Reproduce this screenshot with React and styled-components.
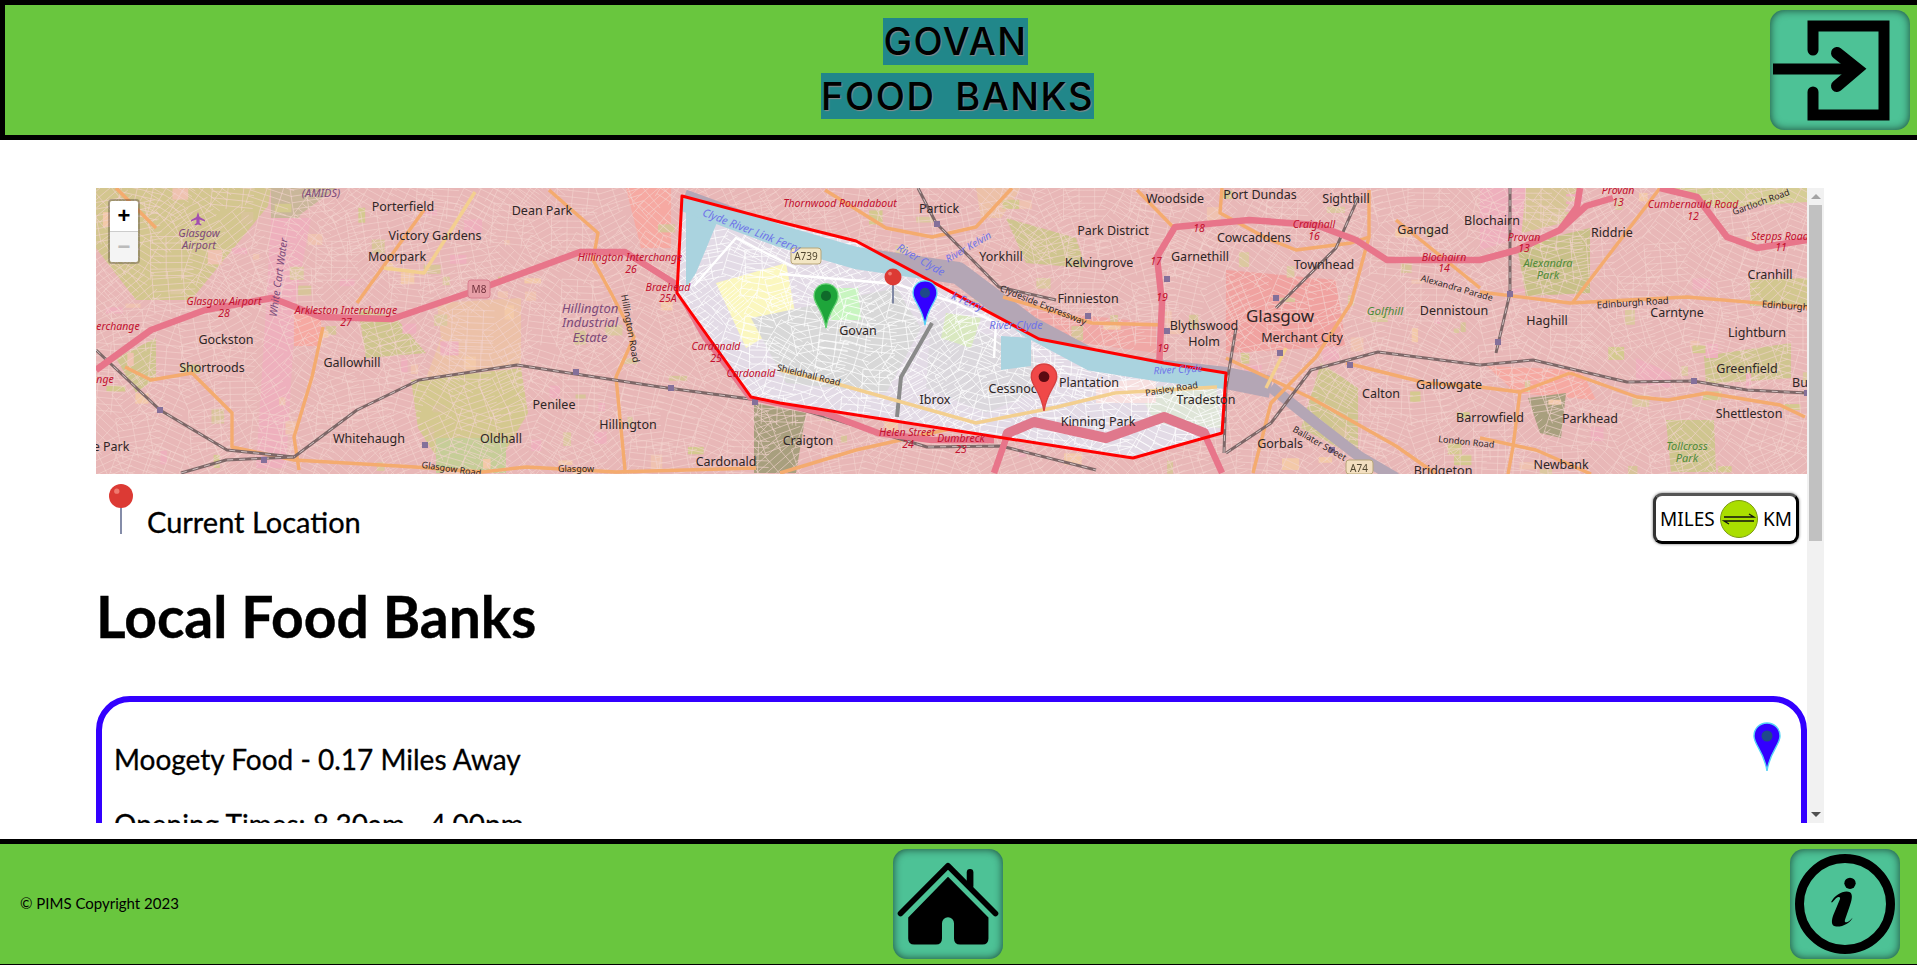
import styled, { createGlobalStyle } from "styled-components";

const GlobalStyle = createGlobalStyle`
  html, body { margin: 0; padding: 0; background: #fff; }
  body { font-family: "Lato", "Noto Sans", sans-serif; color: #000; overflow: hidden; }
`;

const Page = styled.div`
  height: 100vh;
  display: flex;
  flex-direction: column;
`;

const Header = styled.header`
  flex: none;
  height: 140px;
  box-sizing: border-box;
  background: #69c63e;
  border: solid #000;
  border-width: 5px 0 5px 5px;
  padding: 5px 7px 0 0;
  display: grid;
  grid-template-columns: 1fr auto 1fr;
  align-items: start;
`;

const TitleStack = styled.h1`
  grid-column: 2;
  margin: 8px 0 0;
  display: flex;
  flex-direction: column;
  align-items: center;
  gap: 8px;
  font-family: "Inter", sans-serif;
  font-weight: 500;
  font-size: 38px;
  letter-spacing: 1.6px;
  word-spacing: 8px;
`;

const TitleLine = styled.span`
  background: #21878a;
  line-height: 47px;
  height: ${(p) => p.$h || 47}px;
  text-shadow: 1px 1px 1px #8a8a8a;
  white-space: nowrap;
  margin-right: ${(p) => p.$nudge || 0}px;
`;

const IconButton = styled.button`
  width: ${(p) => p.$w || 110}px;
  height: ${(p) => p.$h || 110}px;
  padding: 0;
  border: none;
  border-radius: 14px;
  background: #4dc296;
  box-shadow: inset 0 0 8px rgba(0, 0, 0, 0.65);
  justify-self: end;
  display: block;
  svg { display: block; width: 100%; height: 100%; }
`;

const ScrollFrame = styled.div`
  flex: 1;
  min-height: 0;
  margin: 48px 93px 16px 96px;
  display: flex;
`;

const Main = styled.main`
  flex: 1;
  min-width: 0;
  overflow: hidden;
`;

const ScrollRail = styled.div`
  flex: none;
  width: 17px;
  background: #f1f1f1;
  display: flex;
  flex-direction: column;
  align-items: center;
`;

const RailArrow = styled.div`
  flex: none;
  height: 17px;
  display: flex;
  align-items: center;
  justify-content: center;

  &::before {
    content: "";
    border-left: 5px solid transparent;
    border-right: 5px solid transparent;
    border-${(p) => (p.$down ? "top" : "bottom")}: 5px solid ${(p) => (p.$down ? "#505050" : "#a3a3a3")};
  }
`;

const RailTrack = styled.div`
  flex: 1;
  width: 13px;
`;

const RailThumb = styled.div`
  height: 336px;
  background: #c1c1c1;
`;

const MapBox = styled.div`
  position: relative;
  height: 286px;
  overflow: hidden;
  background: #e8b7b7;
  svg { display: block; }
`;

const ZoomControl = styled.div`
  position: absolute;
  top: 11px;
  left: 12px;
  width: 28px;
  border: 2px solid rgba(0, 0, 0, 0.25);
  border-radius: 4px;
  background-clip: padding-box;
  overflow: hidden;
`;

const ZoomButton = styled.div`
  height: 30px;
  text-align: center;
  font: bold 22px/30px "Liberation Sans", sans-serif;
  background: ${(p) => (p.$off ? "#f4f4f4" : "#fff")};
  color: ${(p) => (p.$off ? "#bbb" : "#000")};
  border-bottom: ${(p) => (p.$off ? "none" : "1px solid #ccc")};
`;

const LegendRow = styled.div`
  display: flex;
  justify-content: space-between;
  align-items: flex-start;
  padding: 10px 8px 0 13px;
`;

const LegendKey = styled.div`
  display: flex;
  align-items: flex-end;
  gap: 14px;
  svg { display: block; }
`;

const LegendText = styled.span`
  font-size: 29px;
  line-height: 36px;
  margin-bottom: -6px;
  -webkit-text-stroke: 0.3px #000;
`;

const UnitToggle = styled.button`
  width: 146px;
  height: 51px;
  margin-top: 9px;
  box-sizing: border-box;
  padding: 0 4px;
  display: flex;
  align-items: center;
  justify-content: space-between;
  background: #fff;
  border: 3px solid #000;
  border-top-color: #555;
  border-left-color: #333;
  border-radius: 9px;
  box-shadow: 0 0 3px rgba(0, 0, 0, 0.6);
  font: 19px "Noto Sans", sans-serif;
  color: #000;
`;

const SwapCircle = styled.span`
  width: 38px;
  height: 38px;
  border-radius: 50%;
  background: #aade00;
  border: 1px solid #7b9a10;
  box-sizing: border-box;
  display: flex;
  align-items: center;
  justify-content: center;
`;

const Heading = styled.h2`
  margin: 36px 0 44px;
  font-size: 57px;
  line-height: 72px;
  font-weight: 700;
  -webkit-text-stroke: 0.4px #000;
`;

const BankCard = styled.section`
  position: relative;
  box-sizing: border-box;
  border: 6px solid ${(p) => p.$color};
  border-radius: 34px;
  padding: 25px 12px;
`;

const BankLine = styled.p`
  margin: 0;
  font-size: 28px;
  line-height: 65px;
  -webkit-text-stroke: 0.3px #000;
`;

const CardPin = styled.svg`
  position: absolute;
  top: 20px;
  right: 20px;
`;

const Footer = styled.footer`
  flex: none;
  height: 126px;
  box-sizing: border-box;
  background: #69c63e;
  border-top: 5px solid #000;
  border-bottom: 1px solid #000;
  padding: 5px 17px 0 20px;
  display: grid;
  grid-template-columns: 1fr auto 1fr;
  align-items: start;
`;

const Copyright = styled.span`
  align-self: center;
  font-size: 15px;
  margin-bottom: 7px;
`;

const HomeSlot = styled.div`
  margin-right: 24px;
`;

const MapLabel = styled.text`
  font-family: "Noto Sans", sans-serif;
  font-size: ${(p) => p.$size || 12.5}px;
  font-style: ${(p) => (p.$kind ? "italic" : "normal")};
  fill: ${(p) =>
    p.$kind === "road" ? "#c2102e" : p.$kind === "park" ? "#4d8a3a" : p.$kind === "area" ? "#7c4a7a" : p.$kind === "water" ? "#6f74e8" : "#2f2626"};
  text-anchor: middle;
`;

const POLY = "586,8 684,34 760,53 943,151 1068,175 1130,185 1126,245 1037,270 1017,267 684,215 655,209 581,105";

const RIVER = "M587 12L684 48L760 70L862 85L934 139L996 172L1059 182L1130 190L1175 199";
const RIVER_EAST = "M1175 199L1220 235L1264 269L1300 290";

const pathOf = (pts) => "M" + pts.map((p) => p.join(" ")).join("L");

const patches = [
  ["#d3c68f", "0,0 175,0 172,18 95,112 40,112 0,60"],
  ["#c9b79a", "175,0 240,0 205,26 190,50 175,40"],
  ["#eeb0bd", "175,30 215,30 200,110 190,280 160,280 170,120"],
  ["#f6a9a2", "198,125 225,125 225,158 198,158"],
  ["#ecc1a8", "341,115 425,110 425,178 330,190 345,150"],
  ["#d4c88f", "315,192 425,180 432,225 410,262 340,268 322,240"],
  ["#c6cd98", "340,250 410,250 410,285 340,285"],
  ["#a89f7e", "658,215 710,225 700,285 658,285"],
  ["#cfc58f", "20,170 60,150 60,190 40,205"],
  ["#cfc58f", "262,120 300,130 330,165 270,170"],
  ["#f6a9a2", "530,0 575,0 575,60 545,60"],
  ["#f0a2a0", "1130,82 1240,92 1250,158 1130,165"],
  ["#cfc58f", "910,30 980,50 990,80 930,75"],
  ["#f0a8a6", "920,120 1060,135 1060,165 950,150"],
  ["#ecc1a8", "880,0 925,0 905,30 885,30"],
  ["#cfc590", "1225,175 1262,200 1262,270 1205,240"],
  ["#c8c088", "1421,58 1494,40 1494,105 1430,108"],
  ["#d7c596", "1425,0 1482,0 1462,36 1426,45"],
  ["#eeb0bd", "1384,0 1430,0 1425,50 1384,62"],
  ["#d5cd95", "1565,0 1711,0 1711,14 1620,20"],
  ["#f6a9a2", "1391,178 1485,182 1500,212 1420,205"],
  ["#a89f7e", "1432,210 1470,205 1465,250 1444,245"],
  ["#cfc58f", "1608,168 1695,155 1695,190 1610,196"],
  ["#cfc58f", "1570,232 1618,232 1620,284 1575,284"],
  ["#d2c78f", "1654,92 1711,90 1711,118 1654,118"],
  ["#eeb0bd", "1540,170 1575,185 1575,200 1540,195"],
];

const motorways = [
  [[0, 182], [55, 142], [109, 122], [176, 110], [225, 129], [296, 131], [381, 102], [484, 64], [529, 64], [578, 95], [609, 149], [654, 209], [729, 225], [782, 245], [836, 252], [898, 252]],
  [[898, 285], [912, 245], [938, 234], [1010, 250], [1068, 229], [1108, 245], [1126, 285]],
  [[1068, 225], [1063, 182], [1066, 115], [1061, 69], [1079, 39], [1153, 32], [1220, 37], [1260, 52], [1291, 72], [1384, 72], [1421, 62], [1464, 42], [1481, 19], [1484, 0]],
  [[1564, 0], [1601, 9], [1631, 49], [1661, 60], [1711, 52]],
  [[1464, 42], [1490, 18], [1517, 10]],
];

const mainRoads = [
  [[1384, 104], [1474, 115], [1591, 109], [1711, 119]],
  [[1477, 114], [1564, 0]],
  [[1474, 185], [1541, 209], [1572, 212], [1611, 205], [1684, 217], [1709, 229]],
  [[1384, 199], [1424, 204], [1474, 185]],
  [[1424, 204], [1417, 259], [1412, 286]],
  [[1384, 250], [1440, 262], [1495, 286]],
  [[328, 22], [261, 115]],
  [[453, 2], [502, 45], [497, 72], [515, 105], [538, 149], [520, 189], [529, 282]],
  [[227, 139], [216, 189], [198, 249], [203, 282]],
  [[29, 179], [55, 192], [96, 185], [136, 225], [136, 259], [198, 272], [319, 279], [386, 284], [430, 279], [520, 284], [660, 280]],
  [[729, 2], [790, 40], [836, 49], [880, 39], [916, 0]],
  [[1041, 2], [1077, 39]],
  [[1126, 0], [1124, 25], [1170, 50], [1200, 62], [1255, 55], [1273, 49], [1273, 2]],
  [[1273, 49], [1255, 115], [1220, 169], [1175, 215], [1157, 285]],
  [[907, 109], [996, 135], [1068, 137]],
  [[1130, 170], [1215, 210], [1300, 258], [1340, 286]],
  [[1250, 175], [1330, 195], [1384, 199]],
  [[684, 285], [760, 262], [880, 235]],
  [[20, 0], [60, 40]],
  [[1300, 32], [1384, 100]],
];

const paleRoads = [
  [[379, 4], [328, 85], [288, 80]],
  [[684, 182], [738, 195], [880, 235], [961, 219], [1019, 205], [1121, 199]],
  [[1190, 160], [1170, 200]],
];

const rails = [
  [[0, 162], [64, 222], [131, 262], [198, 269], [261, 222], [323, 192], [421, 177], [564, 199], [684, 215], [831, 259], [905, 258], [1000, 282]],
  [[85, 285], [130, 272], [198, 269]],
  [[1130, 265], [1175, 235], [1215, 182], [1282, 164], [1384, 177], [1437, 172], [1531, 194], [1597, 193], [1651, 202], [1711, 205]],
  [[822, 0], [840, 35], [903, 99], [960, 112]],
  [[1140, 140], [1130, 200], [1128, 265]],
  [[1180, 120], [1240, 60], [1262, 10]],
  [[1414, 0], [1414, 105], [1400, 165]],
];

const stations = [[64, 222], [168, 272], [480, 184], [575, 200], [659, 214], [329, 257], [841, 36], [992, 128], [1071, 91], [1180, 110], [1184, 165], [1071, 143], [1254, 177], [1414, 106], [1402, 154], [1598, 193], [1711, 205], [1236, 262]];

const labels = [
  ["Loanhead", 361, 0], ["(AMIDS)", 225, 9, "area", 11], ["Porterfield", 307, 23], ["Dean Park", 446, 27], ["Victory Gardens", 339, 52], ["Moorpark", 301, 73],
  ["Glasgow", 103, 49, "area", 11], ["Airport", 103, 61, "area", 11], ["Gockston", 130, 156], ["Shortroods", 116, 184], ["Gallowhill", 256, 179],
  ["Hillington", 494, 125, "area", 13], ["Industrial", 494, 139, "area", 13], ["Estate", 494, 154, "area", 13], ["Penilee", 458, 221], ["Hillington", 532, 241],
  ["Whitehaugh", 273, 255], ["Oldhall", 405, 255], ["Cardonald", 630, 278], ["e Park", 15, 263],
  ["Glasgow Airport", 128, 117, "road", 10.5], ["28", 128, 129, "road", 10.5], ["Arkleston Interchange", 250, 126, "road", 10.5], ["27", 250, 138, "road", 10.5],
  ["Hillington Interchange", 534, 73, "road", 10.5], ["26", 535, 85, "road", 10.5], ["Braehead", 572, 103, "road", 10.5], ["25A", 572, 114, "road", 10.5],
  ["Cardonald", 620, 162, "road", 10.5], ["25", 620, 174, "road", 10.5], ["Cardonald", 655, 189, "road", 10.5], ["erchange", 22, 142, "road", 10.5], ["nge", 9, 195, "road", 10.5],
  ["Thornwood Roundabout", 744, 19, "road", 10.5], ["Partick", 843, 25], ["Woodside", 1079, 15], ["Port Dundas", 1164, 11], ["Sighthill", 1250, 15],
  ["Park District", 1017, 47], ["Cowcaddens", 1158, 54], ["Craighall", 1218, 40, "road", 10.5], ["16", 1218, 52, "road", 10.5], ["18", 1103, 44, "road", 10.5],
  ["Garnethill", 1104, 73], ["Yorkhill", 905, 73], ["Kelvingrove", 1003, 79], ["Townhead", 1228, 81], ["Garngad", 1327, 46],
  ["Blochairn", 1348, 73, "road", 10.5], ["14", 1348, 84, "road", 10.5], ["Finnieston", 992, 115], ["Blythswood", 1108, 142], ["Holm", 1108, 158],
  ["Glasgow", 1184, 134, undefined, 17], ["Merchant City", 1206, 154], ["Golfhill", 1289, 127, "park", 11.5], ["Dennistoun", 1358, 127],
  ["Govan", 762, 147], ["Plantation", 993, 199], ["Cessnock", 920, 205], ["Ibrox", 839, 216], ["Kinning Park", 1002, 238], ["Tradeston", 1110, 216], ["Calton", 1285, 210],
  ["Gallowgate", 1353, 201], ["Gorbals", 1184, 260], ["Craigton", 712, 257], ["Helen Street", 811, 248, "road", 10.5], ["24", 812, 260, "road", 10.5],
  ["Dumbreck", 865, 254, "road", 10.5], ["23", 865, 265, "road", 10.5], ["Bridgeton", 1347, 287], ["17", 1060, 77, "road", 10.5], ["19", 1066, 113, "road", 10.5], ["19", 1067, 164, "road", 10.5],
  ["Provan", 1522, 6, "road", 10.5], ["13", 1522, 18, "road", 10.5], ["Cumbernauld Road", 1597, 20, "road", 10.5], ["12", 1597, 32, "road", 10.5], ["Riddrie", 1516, 49],
  ["Provan", 1428, 53, "road", 10.5], ["13", 1428, 64, "road", 10.5], ["Blochairn", 1396, 37], ["Stepps Road", 1684, 52, "road", 10.5], ["11", 1685, 63, "road", 10.5],
  ["Alexandra", 1452, 79, "park", 11], ["Park", 1452, 91, "park", 11], ["Cranhill", 1674, 91], ["Carntyne", 1581, 129], ["Haghill", 1451, 137], ["Lightburn", 1661, 149],
  ["Greenfield", 1651, 185], ["Bu", 1704, 199], ["Shettleston", 1653, 230], ["Parkhead", 1494, 235], ["Tollcross", 1591, 262, "park", 11], ["Park", 1591, 274, "park", 11],
  ["Barrowfield", 1394, 234], ["Newbank", 1465, 281], ["River Clyde", 920, 141, "water", 11],
];

const tiltedLabels = [
  ["White Cart Water", 186, 90, -82, "area", 10.5], ["Hillington Road", 531, 141, 80, undefined, 9.5], ["Clyde River Link Ferry", 654, 46, 21, "water", 11],
  ["River Clyde", 823, 75, 30, "water", 11], ["River Kelvin", 874, 62, -30, "water", 10], ["Clydeside Expressway", 946, 120, 22, undefined, 9],
  ["k Ferry", 870, 117, 22, "water", 11], ["Paisley Road", 1076, 204, -9, undefined, 9], ["River Clyde", 1082, 185, -3, "water", 10], ["Ballater Street", 1222, 258, 30, undefined, 9],
  ["London Road", 1370, 257, 6, undefined, 9], ["Edinburgh Road", 1537, 118, -4, undefined, 9.5], ["Edinburgh", 1689, 121, 4, undefined, 9.5], ["Gartloch Road", 1666, 17, -20, undefined, 9],
  ["Alexandra Parade", 1360, 103, 16, undefined, 9], ["Shieldhall Road", 712, 190, 14, undefined, 9], ["Glasgow Road", 355, 284, 8, undefined, 9], ["Glasgow", 480, 284, 0, undefined, 9],
];

// tiny seeded generator, so the street mesh comes out the same every time
function seeded(seed) {
  let s = seed;
  return () => {
    s = (s * 16807) % 2147483647;
    return s / 2147483647;
  };
}

// blocks of small crossing streets, each block turned its own way
function makeStreets(seed, x0, x1, y0, y1, cell, gap) {
  const rnd = seeded(seed);
  let d = "";
  for (let x = x0; x < x1; x += cell) {
    for (let y = y0; y < y1; y += cell) {
      const a = rnd() * 1.5 - 0.75;
      const cx = x + cell / 2 + (rnd() - 0.5) * cell * 0.4;
      const cy = y + cell / 2 + (rnd() - 0.5) * cell * 0.4;
      const dx = Math.cos(a);
      const dy = Math.sin(a);
      const half = cell * 0.62;
      for (let i = -half; i <= half; i += gap) {
        const ox = cx - dy * i;
        const oy = cy + dx * i;
        d += `M${(ox - dx * half).toFixed(1)} ${(oy - dy * half).toFixed(1)}L${(ox + dx * half).toFixed(1)} ${(oy + dy * half).toFixed(1)}`;
      }
      for (let i = -half; i <= half; i += gap * 2.4) {
        const ox = cx + dx * i;
        const oy = cy + dy * i;
        d += `M${(ox + dy * half).toFixed(1)} ${(oy - dx * half).toFixed(1)}L${(ox - dy * half).toFixed(1)} ${(oy + dx * half).toFixed(1)}`;
      }
    }
  }
  return d;
}

function makeLots(seed, count) {
  const rnd = seeded(seed);
  const colors = ["#d8c49a", "#efc2b0", "#d4c98f", "#eeb0bd", "#dcc8a0", "#f3c9a8"];
  const lots = [];
  for (let i = 0; i < count; i++) {
    lots.push({
      x: rnd() * 1711,
      y: rnd() * 286,
      w: 5 + rnd() * 14,
      h: 4 + rnd() * 11,
      fill: colors[Math.floor(rnd() * colors.length)],
    });
  }
  return lots;
}

const outerStreets = makeStreets(4211, -10, 1720, -10, 295, 34, 6.5);
const innerStreets = makeStreets(977, 580, 1135, 40, 280, 24, 7);
const lots = makeLots(733, 170);

const PIN = "M14 1C6.5 1 1 6.8 1 14c0 9 10 15 13 35 3-20 13-26 13-35C27 6.8 21.5 1 14 1z";

function MapPin({ x, y, fill, stroke, dot, scale = 1 }) {
  return (
    <g transform={`translate(${x - 14 * scale} ${y}) scale(${scale})`}>
      <path d={PIN} fill={fill} stroke={stroke} strokeWidth="1.4" />
      <circle cx="14" cy="14" r="5.5" fill={dot} />
    </g>
  );
}

function BallPin({ x, y, r, h }) {
  return (
    <g>
      <line x1={x} y1={y + r - 1} x2={x} y2={y + r + h} stroke="#667093" strokeWidth="1.6" />
      <circle cx={x} cy={y} r={r} fill="#dc3a34" />
      <circle cx={x - r * 0.35} cy={y - r * 0.4} r={r * 0.22} fill="#ef7a70" />
    </g>
  );
}

function CityMap() {
  return (
    <svg width="1711" height="286" viewBox="0 0 1711 286">
      <defs>
        <clipPath id="areaClip">
          <polygon points={POLY} />
        </clipPath>
      </defs>
      <rect width="1711" height="286" fill="#e8b7b7" />
      <g style={{ filter: "blur(0.4px)" }}>
        {patches.map(([fill, points]) => (
          <polygon key={points} points={points} fill={fill} />
        ))}
        {lots.map((l) => (
          <rect key={`${l.x}-${l.y}`} x={l.x} y={l.y} width={l.w} height={l.h} fill={l.fill} />
        ))}
        <path d={outerStreets} stroke="#f3d3ce" strokeWidth="0.8" fill="none" opacity="0.8" />
        <path d={RIVER} stroke="#b4a6b5" strokeWidth="22" fill="none" strokeLinejoin="round" />
        <path d={RIVER_EAST} stroke="#b4a6b5" strokeWidth="11" fill="none" strokeLinejoin="round" />
        {mainRoads.map((r, i) => (
          <path key={i} d={pathOf(r)} stroke="#f4ab6e" strokeWidth="3.4" fill="none" strokeLinejoin="round" />
        ))}
        {paleRoads.map((r, i) => (
          <path key={i} d={pathOf(r)} stroke="#f3cf8f" strokeWidth="3.4" fill="none" strokeLinejoin="round" />
        ))}
        {rails.map((r, i) => (
          <g key={i} fill="none" strokeLinejoin="round">
            <path d={pathOf(r)} stroke="#7d6767" strokeWidth="3" />
            <path d={pathOf(r)} stroke="#d9cccc" strokeWidth="0.9" strokeDasharray="6 6" />
          </g>
        ))}
        {motorways.map((r, i) => (
          <path key={i} d={pathOf(r)} stroke="#e8758a" strokeWidth="6.5" fill="none" strokeLinejoin="round" />
        ))}
        {stations.map(([x, y]) => (
          <rect key={`${x}-${y}`} x={x - 3} y={y - 3} width="6" height="6" fill="#84709a" />
        ))}

        <g clipPath="url(#areaClip)">
          <polygon points={POLY} fill="#e3dbe6" />
          <polygon points="620,95 690,75 700,130 650,160" fill="#fbf7bf" />
          <polygon points="655,130 800,100 825,140 790,205 690,195" fill="#d8d8d8" />
          <polygon points="835,130 935,160 950,200 890,225 830,200" fill="#dbd8dd" />
          <polygon points="735,100 762,100 765,132 735,132" fill="#c8f5c0" />
          <polygon points="850,125 885,130 875,160 845,150" fill="#d9e8c0" />
          <polygon points="1040,200 1120,195 1125,240 1060,235" fill="#dfe5d8" />
          <polygon points="1000,195 1060,190 1060,215 1000,215" fill="#f7e0e0" />
          <path d={innerStreets} stroke="#fff" strokeWidth="0.9" fill="none" opacity="0.85" />
          <path d="M590 100L590 15L625 25L600 85Z" fill="#aad3df" />
          <path d={RIVER} stroke="#aad3df" strokeWidth="22" fill="none" strokeLinejoin="round" />
          <path d="M905 148L905 182L935 178L935 150Z" fill="#aad3df" />
          <path d="M598 98L640 50L700 80" stroke="#fff" strokeWidth="2.4" fill="none" />
          <path d="M684 86L800 96L860 115L900 135L898 170" stroke="#fff" strokeWidth="2.4" fill="none" />
          <path d="M836 135L805 189L801 229" stroke="#8a8a8a" strokeWidth="4" fill="none" />
          <path d={pathOf(paleRoads[1])} stroke="#f3cf8f" strokeWidth="3.4" fill="none" />
          <path d={pathOf(motorways[1])} stroke="#e0788c" strokeWidth="10" fill="none" strokeLinejoin="round" />
        </g>

        <g transform="translate(102 30)" fill="#a34fb0">
          <path d="M0-6L1.6-1 7 2V3.4L1.6 1.6V5L3.4 6.6V7.6L0 6.6-3.4 7.6V6.6L-1.6 5V1.6L-7 3.4V2L-1.6-1z" />
        </g>
        <g fontFamily="Noto Sans, sans-serif" fontSize="10" textAnchor="middle">
          <rect x="372" y="92" width="22" height="18" rx="3" fill="#e8a0a8" stroke="#d98090" />
          <text x="383" y="105" fill="#6f2f3a">M8</text>
          <rect x="695" y="60" width="30" height="16" rx="3" fill="#f3e6c4" stroke="#b8a678" />
          <text x="710" y="72" fill="#50452e">A739</text>
          <rect x="1250" y="272" width="27" height="14" rx="3" fill="#f3dfc0" stroke="#b8a678" />
          <text x="1263" y="284" fill="#50452e">A74</text>
        </g>
      </g>

      <polygon points={POLY} fill="none" stroke="#ff0000" strokeWidth="3" strokeLinejoin="round" />

      <g>
        {labels.map(([text, x, y, kind, size]) => (
          <MapLabel key={`${text}-${x}`} x={x} y={y} $kind={kind} $size={size}>
            {text}
          </MapLabel>
        ))}
        {tiltedLabels.map(([text, x, y, rot, kind, size]) => (
          <MapLabel key={`${text}-${x}`} x={x} y={y} transform={`rotate(${rot} ${x} ${y})`} $kind={kind} $size={size}>
            {text}
          </MapLabel>
        ))}
      </g>

      <MapPin x={730} y={95} fill="#1ea53a" stroke="#5fd06f" dot="#0f6a2a" scale={0.92} />
      <BallPin x={797} y={89} r={8.5} h={18} />
      <MapPin x={829} y={92} fill="#3300ff" stroke="#56d4f5" dot="#1f4a8a" scale={0.92} />
      <MapPin x={948} y={175} fill="#f04848" stroke="#d84040" dot="#5b0a12" scale={0.98} />
    </svg>
  );
}

function App() {
  return (
    <Page>
      <GlobalStyle />
      <Header>
        <TitleStack>
          <TitleLine $nudge={4}>GOVAN</TitleLine>
          <TitleLine $h={46}>FOOD BANKS</TitleLine>
        </TitleStack>
        <IconButton $w={140} $h={120} aria-label="Log in">
          <svg viewBox="0 0 140 120" fill="none" stroke="#000">
            <path d="M43 40V16H114V105H43V82" strokeWidth="11" strokeLinecap="round" />
            <path d="M3 59H84" strokeWidth="11" />
            <path d="M67 43L87 59L67 76" strokeWidth="12" strokeLinecap="round" />
          </svg>
        </IconButton>
      </Header>

      <ScrollFrame>
        <Main>
          <MapBox>
            <CityMap />
            <ZoomControl>
              <ZoomButton>+</ZoomButton>
              <ZoomButton $off>−</ZoomButton>
            </ZoomControl>
          </MapBox>

          <LegendRow>
            <LegendKey>
              <svg width="24" height="50" viewBox="0 0 24 50">
                <BallPin x={12} y={12} r={12} h={26} />
              </svg>
              <LegendText>Current Location</LegendText>
            </LegendKey>
            <UnitToggle>
              MILES
              <SwapCircle>
                <svg width="36" height="16" viewBox="0 0 36 16" fill="none" stroke="#111" strokeWidth="1.3">
                  <path d="M3 6H33L28 3" />
                  <path d="M33 10H3L8 13" />
                </svg>
              </SwapCircle>
              KM
            </UnitToggle>
          </LegendRow>

          <Heading>Local Food Banks</Heading>

          <BankCard $color="#3300ff">
            <BankLine>Moogety Food - 0.17 Miles Away</BankLine>
            <BankLine>Opening Times: 8.30am - 4.00pm</BankLine>
            <CardPin width="28" height="50" viewBox="0 0 28 50">
              <path d={PIN} fill="#3300ff" stroke="#56d4f5" strokeWidth="1.4" />
              <circle cx="14" cy="14" r="5.5" fill="#1f4a8a" />
            </CardPin>
          </BankCard>
        </Main>
        <ScrollRail>
          <RailArrow />
          <RailTrack>
            <RailThumb />
          </RailTrack>
          <RailArrow $down />
        </ScrollRail>
      </ScrollFrame>

      <Footer>
        <Copyright>© PIMS Copyright 2023</Copyright>
        <HomeSlot>
          <IconButton aria-label="Home">
            <svg viewBox="0 0 328 329">
              <path d="M22 193L164 50L306 193" fill="none" stroke="#000" strokeWidth="17" strokeLinecap="round" strokeLinejoin="round" />
              <path d="M230 70V110" stroke="#000" strokeWidth="20" strokeLinecap="round" />
              <path d="M164 83L285 205V268Q285 286 267 286H200Q182 286 182 268V222A18 18 0 0 0 146 222V268Q146 286 128 286H63Q45 286 45 268V205Z" fill="#000" />
            </svg>
          </IconButton>
        </HomeSlot>
        <IconButton aria-label="Information">
          <svg viewBox="0 0 330 330">
            <circle cx="165" cy="165" r="136.5" fill="none" stroke="#000" strokeWidth="27" />
            <circle cx="180" cy="103" r="17" fill="#000" />
            <path d="M123 160C135 135 165 122 180 130C190 137 185 155 178 175L165 212C162 222 170 222 178 216L188 206C180 222 155 236 135 232C122 228 125 212 130 198L150 150C152 142 145 142 138 148L127 160Z" fill="#000" />
          </svg>
        </IconButton>
      </Footer>
    </Page>
  );
}

export default App;
